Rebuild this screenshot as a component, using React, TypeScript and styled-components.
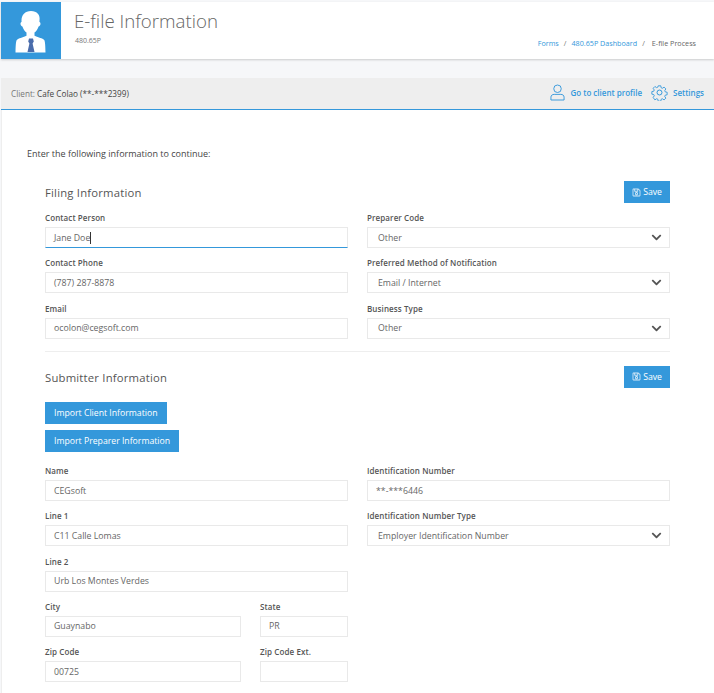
import React from "react";
import styled, { createGlobalStyle } from "styled-components";
import { FaChevronDown, FaRegSave } from "react-icons/fa";

const GlobalStyle = createGlobalStyle`
  html, body {
    margin: 0;
    padding: 0;
    background: #f6f7f9;
    font-family: "Open Sans", "Liberation Sans", sans-serif;
    overflow: hidden;
  }
`;

function PersonLogo() {
  return (
    <svg width="60" height="57" viewBox="0 0 60 57">
      <path
        fill="#fff"
        d="M30 9c-6 0-9.500 4-9.500 9.500 0 .6 0 1 .1 1.500-1 .3-1.300 1.400-1 2.600.3 1.100 1 1.900 1.800 1.900.8 2.600 2.300 4.800 4.100 6.100v3.200c-3 1.500-7.500 2.300-9.500 4-1.200 1.100-1.300 6-1.500 12.700h30c-.2-6.700-.3-11.600-1.500-12.700-2-1.700-6.500-2.500-9.500-4v-3.200c1.800-1.300 3.300-3.500 4.100-6.100.8 0 1.500-.8 1.800-1.900.3-1.200 0-2.300-1-2.600.1-.5.1-.9.100-1.500C39.500 13 36 9 30 9z"
      />
      <path fill="#4a6cab" d="M28 36.500h4l.8 3-1.200 2 1.900 8.500h-7l1.900-8.500-1.200-2z" />
    </svg>
  );
}

function UserIcon() {
  return (
    <svg width="15" height="17" viewBox="0 0 16 18" fill="none" stroke="#3498db" strokeWidth="1">
      <circle cx="8" cy="5" r="4" />
      <path d="M1 17v-3c0-2 1.500-3 3.500-3h7c2 0 3.500 1 3.500 3v3z" strokeLinejoin="round" />
    </svg>
  );
}

function GearIcon() {
  return (
    <svg width="17" height="17" viewBox="0 0 24 24" fill="none" stroke="#3498db" strokeWidth="1.400" strokeLinejoin="round">
      <circle cx="12" cy="12" r="3.500" />
      <path d="M10 1.500h4l.6 3.100 1.900.8 2.700-1.800 2.800 2.800-1.800 2.700.8 1.900 3 .6v4l-3 .6-.8 1.900 1.800 2.700-2.800 2.800-2.700-1.800-1.900.8-.6 3.100h-4l-.6-3.100-1.900-.8-2.700 1.800L2 19.800l1.800-2.700-.8-1.900-3-.6v-4l3-.6.8-1.900L2 5.400l2.800-2.800 2.700 1.800 1.900-.8z" transform="translate(1.200 1.200) scale(.9)" />
    </svg>
  );
}

function Field({ label, value, active }: { label: string; value: string; active?: boolean }) {
  return (
    <FieldBox>
      <Label>{label}</Label>
      <TextBox $active={active}>
        {value}
        {active && <Caret />}
      </TextBox>
    </FieldBox>
  );
}

function SelectField({ label, value }: { label: string; value: string }) {
  return (
    <FieldBox>
      <Label>{label}</Label>
      <SelectBox>
        <SelectValue>{value}</SelectValue>
        <FaChevronDown size={11} color="#555" />
      </SelectBox>
    </FieldBox>
  );
}

function SaveButton() {
  return (
    <Button $small>
      <FaRegSave size={9} color="#d6e9f8" />
      Save
    </Button>
  );
}

export default function App() {
  return (
    <Page>
      <GlobalStyle />
      <Header>
        <LogoTile>
          <PersonLogo />
        </LogoTile>
        <HeaderText>
          <Title>E-file Information</Title>
          <Subtitle>480.65P</Subtitle>
        </HeaderText>
        <Breadcrumbs>
          <Crumb>Forms</Crumb>
          <Slash>/</Slash>
          <Crumb>480.65P Dashboard</Crumb>
          <Slash>/</Slash>
          <CurrentCrumb>E-file Process</CurrentCrumb>
        </Breadcrumbs>
      </Header>

      <ClientBar>
        <ClientText>
          Client: <strong>Cafe Colao</strong> <strong>(**-***2399)</strong>
        </ClientText>
        <BarLinks>
          <BarLink>
            <UserIcon />
            Go to client profile
          </BarLink>
          <BarLink>
            <GearIcon />
            Settings
          </BarLink>
        </BarLinks>
      </ClientBar>

      <Panel>
        <Intro>Enter the following information to continue:</Intro>
        <Form>
          <SectionHead>
            <SectionTitle>Filing Information</SectionTitle>
            <SaveButton />
          </SectionHead>
          <Columns>
            <Column>
              <Field label="Contact Person" value="Jane Doe" active />
              <Field label="Contact Phone" value="(787) 287-8878" />
              <Field label="Email" value="ocolon@cegsoft.com" />
            </Column>
            <Column>
              <SelectField label="Preparer Code" value="Other" />
              <SelectField label="Preferred Method of Notification" value="Email / Internet" />
              <SelectField label="Business Type" value="Other" />
            </Column>
          </Columns>

          <Divider />

          <SectionHead>
            <SectionTitle>Submitter Information</SectionTitle>
            <SaveButton />
          </SectionHead>
          <ImportButtons>
            <Button>Import Client Information</Button>
            <Button>Import Preparer Information</Button>
          </ImportButtons>
          <Columns>
            <Column>
              <Field label="Name" value="CEGsoft" />
              <Field label="Line 1" value="C11 Calle Lomas" />
              <Field label="Line 2" value="Urb Los Montes Verdes" />
              <CityRow>
                <Field label="City" value="Guaynabo" />
                <Field label="State" value="PR" />
              </CityRow>
              <CityRow>
                <Field label="Zip Code" value="00725" />
                <Field label="Zip Code Ext." value="" />
              </CityRow>
            </Column>
            <Column>
              <Field label="Identification Number" value="**-***6446" />
              <SelectField label="Identification Number Type" value="Employer Identification Number" />
            </Column>
          </Columns>
        </Form>
      </Panel>
    </Page>
  );
}

const Page = styled.div`
  width: 714px;
  height: 693px;
  overflow: hidden;
  padding: 2px 0 0 1px;
  box-sizing: border-box;
  color: #555;
`;

const Header = styled.div`
  display: flex;
  height: 57px;
  background: #fff;
  box-shadow: 0 1px 2px rgba(0, 0, 0, 0.18);
`;

const LogoTile = styled.div`
  width: 60px;
  background: #3498db;
  display: flex;
`;

const HeaderText = styled.div`
  flex: 1;
  padding: 5px 0 0 13px;
`;

const Title = styled.div`
  font-size: 18.700px;
  font-weight: 300;
  line-height: 27px;
  color: #666;
`;

const Subtitle = styled.div`
  font-size: 7px;
  line-height: 10px;
  margin-top: 2px;
  margin-left: 1px;
  color: #777;
`;

const Breadcrumbs = styled.div`
  display: flex;
  align-items: flex-end;
  gap: 5px;
  padding: 0 18px 11px 0;
  font-size: 7.200px;
  line-height: 10px;
`;

const Crumb = styled.span`
  color: #3498db;
`;

const Slash = styled.span`
  color: #777;
`;

const CurrentCrumb = styled.span`
  color: #666;
  margin-left: 2px;
`;

const ClientBar = styled.div`
  margin-top: 19px;
  height: 31px;
  background: #eeeeee;
  border-bottom: 1px solid #3498db;
  display: flex;
  align-items: center;
  justify-content: space-between;
  padding: 0 10px;
`;

const ClientText = styled.div`
  font-size: 8.200px;
  color: #777;
  strong {
    font-weight: 400;
    color: #444;
  }
`;

const BarLinks = styled.div`
  display: flex;
  gap: 9px;
  padding-bottom: 3px;
`;

const BarLink = styled.div`
  display: flex;
  align-items: center;
  gap: 5px;
  font-size: 8px;
  font-weight: 600;
  color: #3498db;
`;

const Panel = styled.div`
  background: #fff;
  height: 600px;
  border-left: 1px solid #eee;
  padding: 38px 0 0 25px;
`;

const Intro = styled.div`
  font-size: 9px;
  line-height: 12px;
  color: #444;
`;

const Form = styled.div`
  width: 625px;
  margin: 21px 0 0 18px;
`;

const SectionHead = styled.div`
  display: flex;
  align-items: flex-start;
  justify-content: space-between;
  height: 32px;
`;

const SectionTitle = styled.div`
  font-size: 11.300px;
  line-height: 23px;
  letter-spacing: 0.2px;
  color: #555;
`;

const Button = styled.div<{ $small?: boolean }>`
  display: inline-flex;
  align-items: center;
  justify-content: center;
  gap: 2px;
  height: 22px;
  padding: 0 ${(p) => (p.$small ? "8px" : "9px")};
  background: #3498db;
  color: #fff;
  font-size: 8.700px;
`;

const ImportButtons = styled.div`
  display: flex;
  flex-direction: column;
  align-items: flex-start;
  gap: 6px;
  margin: 4px 0 14.500px;
`;

const Columns = styled.div`
  display: grid;
  grid-template-columns: 303px 303px;
  gap: 19px;
`;

const Column = styled.div`
  display: flex;
  flex-direction: column;
  gap: 10.300px;
`;

const CityRow = styled.div`
  display: grid;
  grid-template-columns: 196px 88px;
  gap: 19px;
`;

const FieldBox = styled.div`
  display: flex;
  flex-direction: column;
  gap: 5px;
`;

const Label = styled.div`
  font-size: 8px;
  font-weight: 600;
  line-height: 9px;
  color: #555;
  letter-spacing: 0.1px;
`;

const TextBox = styled.div<{ $active?: boolean }>`
  box-sizing: border-box;
  height: 21px;
  display: flex;
  align-items: center;
  padding: 0 8px;
  background: #fff;
  border: 1px solid #e9e9e9;
  border-bottom-color: ${(p) => (p.$active ? "#3498db" : "#e9e9e9")};
  font-size: 8.750px;
  color: #666;
`;

const SelectBox = styled(TextBox)`
  padding: 0 7px 0 10px;
`;

const SelectValue = styled.span`
  flex: 1;
`;

const Caret = styled.span`
  width: 1px;
  height: 12px;
  background: #333;
`;

const Divider = styled.div`
  height: 1px;
  background: #eee;
  margin: 12px 0 14px;
`;
